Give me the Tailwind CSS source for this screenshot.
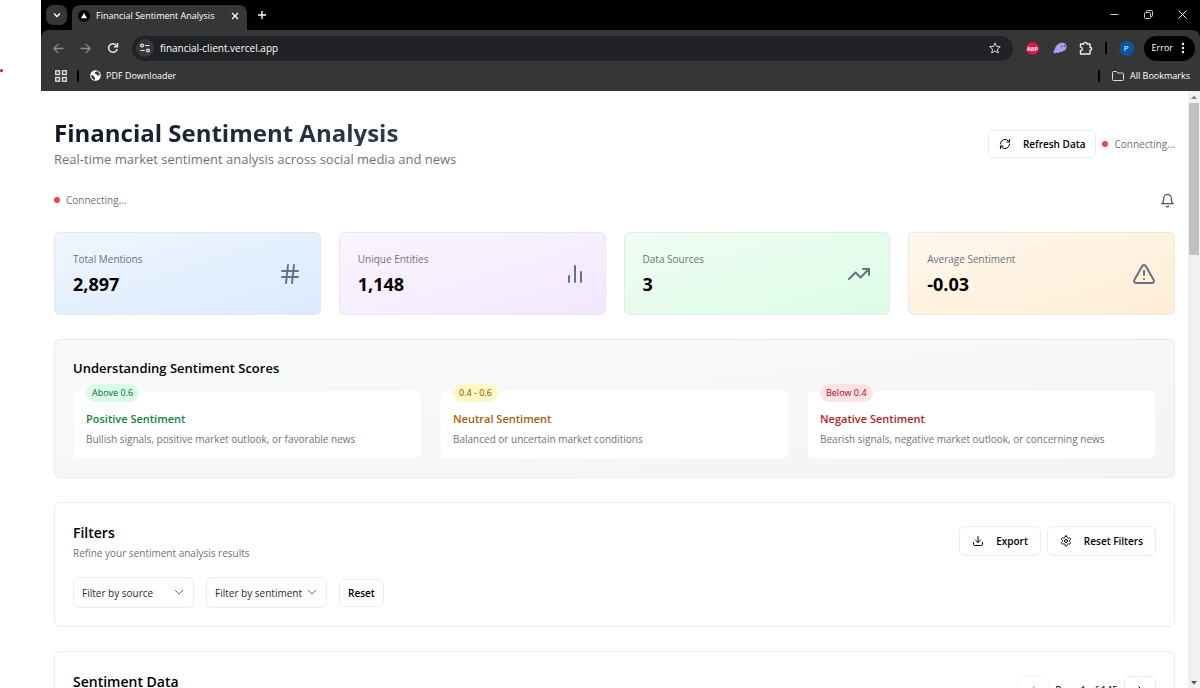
<!DOCTYPE html>
<html lang="en">
<head>
  <meta charset="UTF-8">
  <meta name="viewport" content="width=device-width, initial-scale=1">
  <title>Financial Sentiment Analysis</title>
  <!-- Tailwind CSS -->
  <script src="https://cdn.jsdelivr.net/npm/@tailwindcss/browser@4"></script>
</head>
<body class="flex h-screen overflow-hidden bg-white font-['Open_Sans','Noto_Sans',sans-serif] text-[10px] leading-4 text-black">

  <!-- Margin beside the window -->
  <div class="w-[41px] shrink-0 pt-[69px]">
    <div class="h-[3px] w-[3px] rounded-full bg-red-600"></div>
  </div>

  <div class="flex min-w-0 flex-1 flex-col">

    <!-- Browser chrome -->
    <header class="shrink-0 bg-black text-[10px] text-white">
      <div class="flex h-[30px] items-end">
        <button aria-label="Search tabs" class="mb-[5px] ml-[5px] flex h-5 w-[21px] items-center justify-center rounded-[7px] bg-[#363636]">
          <svg class="h-2 w-2" viewBox="0 0 8 8" fill="none" stroke="currentColor" stroke-width="1.3"><path d="M1 2.5l3 3 3-3"/></svg>
        </button>
        <div class="ml-[5px] flex h-[25px] w-[175px] items-center rounded-t-lg bg-[#363636] pr-2 pb-1 pl-1.5">
          <svg class="h-3 w-3" viewBox="0 0 12 12"><circle cx="6" cy="6" r="6" fill="#000"/><path d="M6 3l3 5.2H3z" fill="#fff"/></svg>
          <span class="ml-1.5 flex-1 whitespace-nowrap text-[9px]">Financial Sentiment Analysis</span>
          <button aria-label="Close tab"><svg class="h-2 w-2" viewBox="0 0 8 8" stroke="currentColor" stroke-width="1.3"><path d="M1 1l6 6M7 1L1 7"/></svg></button>
        </div>
        <button aria-label="New tab" class="mb-[11px] ml-[11px]"><svg class="h-2 w-2" viewBox="0 0 8 8" stroke="currentColor" stroke-width="1.4"><path d="M4 0v8M0 4h8"/></svg></button>
        <div class="mr-[13px] mb-[11px] ml-auto flex gap-[25px]">
          <button aria-label="Minimize"><svg class="h-[9px] w-[9px]" viewBox="0 0 9 9" stroke="#ccc"><path d="M.5 4.5h8"/></svg></button>
          <button aria-label="Restore"><svg class="h-[9px] w-[9px]" viewBox="0 0 9 9" fill="none" stroke="#ccc"><rect x=".5" y="2.5" width="6" height="6" rx="1"/><path d="M2.5 2.5V1.5a1 1 0 0 1 1-1h4a1 1 0 0 1 1 1v4a1 1 0 0 1-1 1h-1"/></svg></button>
          <button aria-label="Close window"><svg class="h-[9px] w-[9px]" viewBox="0 0 9 9" stroke="#eee"><path d="M.5.5l8 8M8.5.5l-8 8"/></svg></button>
        </div>
      </div>

      <div class="rounded-t-lg bg-[#363636]">
        <div class="flex h-9 items-center pr-[5px] pl-3">
          <div class="flex items-center gap-4">
            <button aria-label="Back"><svg class="h-[11px] w-[11px]" viewBox="0 0 10 10" fill="none" stroke="#8a8a8a" stroke-width="1.2"><path d="M9.5 5H1M5 .8L.8 5 5 9.200"/></svg></button>
            <button aria-label="Forward"><svg class="h-[11px] w-[11px]" viewBox="0 0 10 10" fill="none" stroke="#8a8a8a" stroke-width="1.2"><path d="M.5 5H9M5 .8L9.200 5 5 9.200"/></svg></button>
            <button aria-label="Reload"><svg class="h-3 w-3" viewBox="0 0 12 12" fill="none" stroke="#eee" stroke-width="1.4"><path d="M10.200 6.800A4.300 4.300 0 1 1 9.400 3.400L10.500 4.600"/><path d="M10.500 1v3.700H7"/></svg></button>
          </div>
          <div class="mx-[13px] flex h-[25px] flex-1 items-center rounded-full bg-[#212226] pr-3 pl-1">
            <span class="flex h-[18px] w-[18px] items-center justify-center rounded-full bg-[#36373a]">
              <svg class="h-2.5 w-2.5" viewBox="0 0 10 10" fill="none" stroke="#e8e8e8" stroke-width="1.2"><circle cx="2" cy="2.500" r="1.400"/><path d="M5 2.500h4.500M.5 7.500h4.200"/><circle cx="8" cy="7.500" r="1.400"/></svg>
            </span>
            <input aria-label="Address" type="text" value="financial-client.vercel.app" class="ml-1.5 min-w-0 flex-1 bg-transparent text-[10px] outline-none">
            <button aria-label="Bookmark this page"><svg class="h-3 w-3" viewBox="0 0 12 12" fill="none" stroke="#ddd" stroke-linejoin="round"><path d="M6 .9l1.500 3.500 3.800.3-2.900 2.500.9 3.700L6 8.900l-3.300 2 .9-3.700L.7 4.700l3.800-.3z"/></svg></button>
          </div>
          <div class="flex items-center">
            <svg class="h-[13px] w-[13px]" viewBox="0 0 14 14"><path d="M4.300.5h5.400l3.800 3.800v5.400l-3.800 3.800H4.300L.5 9.700V4.300z" fill="#e5174b"/><text x="7" y="9.300" text-anchor="middle" font-size="6" font-weight="700" fill="#fff">ABP</text></svg>
            <svg class="ml-3.5 h-3 w-3.5" viewBox="0 0 14 12"><path d="M.8 11c-.8-1 .2-2 .8-3.500C2.800 3 6 .7 9.300.7c3 0 4.400 2 4.200 4.300-.2 2.200-1.500 3.700-3 3.700-.8 0-.8.9-1.700 1.200-.9.3-1.300-.6-2 .1-.6.8-1.600 1.400-2.500.8-.8-.5-1 .2-1.700.4-.6.2-1.400.2-1.800-.2z" fill="#ab9ff2"/><path d="M9 3.200v1.600M11.600 3.200v1.600" stroke="#363636" stroke-width="1.100"/></svg>
            <svg class="ml-3 h-3.5 w-3.5" viewBox="0 0 14 14" fill="none" stroke="#eee" stroke-width="1.400" stroke-linejoin="round"><path d="M1.500 3h3.300c0-2.200 3.200-2.200 3.200 0h3v3.300c2.200 0 2.200 3 0 3V13H1.500V9.800c2.500-.1 2.500-3.600 0-3.700z"/></svg>
            <span class="ml-3 h-3 w-0.5 bg-black"></span>
            <span class="ml-3 flex h-[15px] w-[15px] items-center justify-center rounded-full bg-[#0b57a4] text-[8px]">P</span>
            <button class="ml-2.5 flex h-[25px] items-center gap-2 rounded-full bg-black pr-2.5 pl-2 text-[9px]">Error
              <svg class="h-3 w-1" viewBox="0 0 4 12" fill="currentColor"><circle cx="2" cy="2" r="1.200"/><circle cx="2" cy="6" r="1.200"/><circle cx="2" cy="10" r="1.200"/></svg>
            </button>
          </div>
        </div>
        <nav class="flex h-[25px] items-center pr-2.5 pb-1.5 pl-3.5 text-[9px]">
          <svg class="h-3 w-3" viewBox="0 0 11 11" fill="none" stroke="#ddd" stroke-width="1.300"><rect x=".7" y=".7" width="3.400" height="3.400"/><rect x="6.900" y=".7" width="3.400" height="3.400"/><rect x=".7" y="6.900" width="3.400" height="3.400"/><rect x="6.900" y="6.900" width="3.400" height="3.400"/></svg>
          <span class="ml-2.5 h-3 w-0.5 bg-black"></span>
          <a href="#" class="ml-[11px] flex items-center gap-[5px]">
            <svg class="h-[11px] w-[11px]" viewBox="0 0 11 11"><circle cx="5.500" cy="5.500" r="5.300" fill="#fff"/><path d="M1.200 5.200c1.800 0 2.800.3 2.800 1.300s1 .8 1 1.700v1.600C2.700 9.700 1 7.700 1.200 5.200zM6.500 1.200c-.1 1-1.700.8-1.700 1.900s1.500.7 2 1.600c.4.900 1.800.7 3 .6C9.700 3.200 8.400 1.700 6.500 1.200z" fill="#363636"/></svg>
            PDF Downloader
          </a>
          <span class="ml-auto h-3 w-0.5 bg-black"></span>
          <a href="#" class="ml-3 flex items-center gap-1.5">
            <svg class="h-2.5 w-3" viewBox="0 0 12 10" fill="none" stroke="#ddd" stroke-linejoin="round"><path d="M.5 1.500a1 1 0 0 1 1-1h3l1.300 1.500h4.700a1 1 0 0 1 1 1v5.500a1 1 0 0 1-1 1h-9a1 1 0 0 1-1-1z"/></svg>
            All Bookmarks
          </a>
        </nav>
      </div>
    </header>

    <!-- Page -->
    <div class="flex min-h-0 flex-1">
      <main class="flex min-w-0 flex-1 flex-col gap-6 overflow-hidden px-[13px] pt-7">

        <div class="flex items-center justify-between">
          <div>
            <h1 class="bg-gradient-to-r from-gray-900 to-gray-700 bg-clip-text text-[24px] leading-[27px] font-bold text-transparent">Financial Sentiment Analysis</h1>
            <p class="mt-1 text-[13px] leading-[18px] text-zinc-500">Real-time market sentiment analysis across social media and news</p>
          </div>
          <div class="flex items-center gap-1.5">
            <button class="flex h-7 items-center gap-3 rounded-md border border-zinc-200/70 px-2.5 font-semibold">
              <svg class="h-3 w-3" viewBox="0 0 24 24" fill="none" stroke="currentColor" stroke-width="2" stroke-linecap="round" stroke-linejoin="round"><path d="M3 12a9 9 0 0 1 9-9 9.750 9.750 0 0 1 6.740 2.740L21 8"/><path d="M21 3v5h-5"/><path d="M21 12a9 9 0 0 1-9 9 9.750 9.750 0 0 1-6.740-2.740L3 16"/><path d="M8 16H3v5"/></svg>
              Refresh Data
            </button>
            <div class="flex items-center gap-1.5 text-zinc-500"><span class="h-1.5 w-1.5 rounded-full bg-[#ef4444]"></span>Connecting...</div>
          </div>
        </div>

        <div class="flex h-[18px] items-center justify-between">
          <div class="flex items-center gap-1.5 text-zinc-500"><span class="h-1.5 w-1.5 rounded-full bg-[#ef4444]"></span>Connecting...</div>
          <button aria-label="Notifications" class="text-gray-600"><svg class="h-[15px] w-[15px]" viewBox="0 0 24 24" fill="none" stroke="currentColor" stroke-width="2" stroke-linecap="round" stroke-linejoin="round"><path d="M6 8a6 6 0 0 1 12 0c0 7 3 9 3 9H3s3-2 3-9"/><path d="M10.300 21a1.940 1.940 0 0 0 3.400 0"/></svg></button>
        </div>

        <!-- Stats -->
        <section class="grid grid-cols-4 gap-[18px]">
          <div class="flex items-center justify-between rounded-md border border-zinc-200/70 bg-gradient-to-br from-blue-50 to-blue-100 p-[18px]">
            <div>
              <p class="font-medium text-zinc-500">Total Mentions</p>
              <p class="mt-1.5 text-[18px] leading-[23px] font-bold">2,897</p>
            </div>
            <svg class="h-6 w-6 text-gray-500" viewBox="0 0 24 24" fill="none" stroke="currentColor" stroke-width="2" stroke-linecap="round" stroke-linejoin="round"><path d="M4 9h16M4 15h16M10 3L8 21M16 3l-2 18"/></svg>
          </div>
          <div class="flex items-center justify-between rounded-md border border-zinc-200/70 bg-gradient-to-br from-purple-50 to-purple-100 p-[18px]">
            <div>
              <p class="font-medium text-zinc-500">Unique Entities</p>
              <p class="mt-1.5 text-[18px] leading-[23px] font-bold">1,148</p>
            </div>
            <svg class="h-6 w-6 text-gray-500" viewBox="0 0 24 24" fill="none" stroke="currentColor" stroke-width="2" stroke-linecap="round" stroke-linejoin="round"><path d="M18 20V10M12 20V4M6 20v-6"/></svg>
          </div>
          <div class="flex items-center justify-between rounded-md border border-zinc-200/70 bg-gradient-to-br from-green-50 to-green-100 p-[18px]">
            <div>
              <p class="font-medium text-zinc-500">Data Sources</p>
              <p class="mt-1.5 text-[18px] leading-[23px] font-bold">3</p>
            </div>
            <svg class="h-6 w-6 text-gray-500" viewBox="0 0 24 24" fill="none" stroke="currentColor" stroke-width="2" stroke-linecap="round" stroke-linejoin="round"><path d="M22 7l-8.500 8.500-5-5L2 17"/><path d="M16 7h6v6"/></svg>
          </div>
          <div class="flex items-center justify-between rounded-md border border-zinc-200/70 bg-gradient-to-br from-orange-50 to-orange-100 p-[18px]">
            <div>
              <p class="font-medium text-zinc-500">Average Sentiment</p>
              <p class="mt-1.5 text-[18px] leading-[23px] font-bold">-0.03</p>
            </div>
            <svg class="h-6 w-6 text-gray-500" viewBox="0 0 24 24" fill="none" stroke="currentColor" stroke-width="2" stroke-linecap="round" stroke-linejoin="round"><path d="M21.730 18l-8-14a2 2 0 0 0-3.480 0l-8 14A2 2 0 0 0 4 21h16a2 2 0 0 0 1.730-3"/><path d="M12 9v4M12 17h.01"/></svg>
          </div>
        </section>

        <!-- Score legend -->
        <section class="rounded-md border border-zinc-200/70 bg-gradient-to-br from-gray-50 to-gray-100 p-[18px]">
          <h2 class="text-[13px] leading-5 font-semibold">Understanding Sentiment Scores</h2>
          <div class="mt-3 grid grid-cols-3 gap-[18px]">
            <div class="relative rounded-md border border-green-50 bg-white px-3 pt-5 pb-[11px]">
              <span class="absolute -top-[7px] left-3 rounded-full bg-green-100 px-1.5 text-[9px] leading-[18px] font-medium text-green-800">Above 0.6</span>
              <h3 class="text-[11px] font-semibold text-[#15803d]">Positive Sentiment</h3>
              <p class="mt-1 text-zinc-500">Bullish signals, positive market outlook, or favorable news</p>
            </div>
            <div class="relative rounded-md border border-yellow-50 bg-white px-3 pt-5 pb-[11px]">
              <span class="absolute -top-[7px] left-3 rounded-full bg-yellow-100 px-1.5 text-[9px] leading-[18px] font-medium text-yellow-800">0.4 - 0.6</span>
              <h3 class="text-[11px] font-semibold text-[#a16207]">Neutral Sentiment</h3>
              <p class="mt-1 text-zinc-500">Balanced or uncertain market conditions</p>
            </div>
            <div class="relative rounded-md border border-red-50 bg-white px-3 pt-5 pb-[11px]">
              <span class="absolute -top-[7px] left-3 rounded-full bg-red-100 px-1.5 text-[9px] leading-[18px] font-medium text-red-800">Below 0.4</span>
              <h3 class="text-[11px] font-semibold text-[#b91c1c]">Negative Sentiment</h3>
              <p class="mt-1 text-zinc-500">Bearish signals, negative market outlook, or concerning news</p>
            </div>
          </div>
        </section>

        <!-- Filters -->
        <section class="rounded-md border border-zinc-200/70 p-[18px]">
          <div class="flex items-center justify-between">
            <div>
              <h2 class="text-[14px] leading-6 font-semibold">Filters</h2>
              <p class="text-zinc-500">Refine your sentiment analysis results</p>
            </div>
            <div class="flex gap-1.5">
              <button class="flex h-[30px] items-center gap-3 rounded-md border border-zinc-200/70 px-3 font-semibold">
                <svg class="h-3 w-3" viewBox="0 0 24 24" fill="none" stroke="currentColor" stroke-width="2" stroke-linecap="round" stroke-linejoin="round"><path d="M21 15v4a2 2 0 0 1-2 2H5a2 2 0 0 1-2-2v-4"/><path d="M7 10l5 5 5-5M12 15V3"/></svg>
                Export
              </button>
              <button class="flex h-[30px] items-center gap-3 rounded-md border border-zinc-200/70 px-3 font-semibold">
                <svg class="h-3 w-3" viewBox="0 0 24 24" fill="none" stroke="currentColor" stroke-width="2" stroke-linecap="round" stroke-linejoin="round"><path d="M12.220 2h-.44a2 2 0 0 0-2 2v.18a2 2 0 0 1-1 1.730l-.43.25a2 2 0 0 1-2 0l-.15-.08a2 2 0 0 0-2.730.73l-.22.38a2 2 0 0 0 .73 2.730l.15.1a2 2 0 0 1 1 1.720v.51a2 2 0 0 1-1 1.740l-.15.09a2 2 0 0 0-.73 2.730l.22.38a2 2 0 0 0 2.730.73l.15-.08a2 2 0 0 1 2 0l.43.25a2 2 0 0 1 1 1.730V20a2 2 0 0 0 2 2h.44a2 2 0 0 0 2-2v-.18a2 2 0 0 1 1-1.730l.43-.25a2 2 0 0 1 2 0l.15.08a2 2 0 0 0 2.730-.73l.22-.39a2 2 0 0 0-.73-2.730l-.15-.08a2 2 0 0 1-1-1.740v-.5a2 2 0 0 1 1-1.740l.15-.09a2 2 0 0 0 .73-2.730l-.22-.38a2 2 0 0 0-2.730-.73l-.15.08a2 2 0 0 1-2 0l-.43-.25a2 2 0 0 1-1-1.730V4a2 2 0 0 0-2-2z"/><circle cx="12" cy="12" r="3"/></svg>
                Reset Filters
              </button>
            </div>
          </div>
          <div class="mt-4 flex items-center gap-3">
            <div class="relative">
              <select aria-label="Filter by source" class="h-[31px] w-[121px] appearance-none rounded-md border border-zinc-200/70 bg-white pl-2 text-gray-800">
                <option>Filter by source</option>
              </select>
              <svg class="pointer-events-none absolute top-2.5 right-2.5 h-2.5 w-2.5 text-gray-500" viewBox="0 0 10 10" fill="none" stroke="currentColor"><path d="M1 3l4 4 4-4"/></svg>
            </div>
            <div class="relative">
              <select aria-label="Filter by sentiment" class="h-[31px] w-[121px] appearance-none rounded-md border border-zinc-200/70 bg-white pl-2 text-gray-800">
                <option>Filter by sentiment</option>
              </select>
              <svg class="pointer-events-none absolute top-2.5 right-2.5 h-2.5 w-2.5 text-gray-500" viewBox="0 0 10 10" fill="none" stroke="currentColor"><path d="M1 3l4 4 4-4"/></svg>
            </div>
            <button class="h-7 rounded-md border border-zinc-200/70 px-2 font-semibold">Reset</button>
          </div>
        </section>

        <!-- Data table card -->
        <section class="rounded-md border border-zinc-200/70 p-[18px]">
          <div class="flex h-10 items-center justify-between">
            <h2 class="self-start text-[14px] leading-6 font-semibold">Sentiment Data</h2>
            <div class="flex items-center gap-1.5">
              <button aria-label="Previous page" class="flex h-7 w-8 items-center justify-center rounded-md border border-zinc-200/70 opacity-50"><svg class="h-2.5 w-2.5" viewBox="0 0 10 10" fill="none" stroke="currentColor"><path d="M6.500 1.500L3 5l3.500 3.500"/></svg></button>
              <span>Page 1 of 145</span>
              <button aria-label="Next page" class="flex h-7 w-8 items-center justify-center rounded-md border border-zinc-200/70"><svg class="h-2.5 w-2.5" viewBox="0 0 10 10" fill="none" stroke="currentColor"><path d="M3.500 1.500L7 5 3.500 8.500"/></svg></button>
            </div>
          </div>
        </section>
      </main>

      <!-- Scrollbar -->
      <div class="flex w-3 shrink-0 flex-col items-center bg-[#f1f1f1]">
        <svg class="h-3 w-3" viewBox="0 0 12 12" fill="#8a8a8a"><path d="M6 4.500L9 8H3z"/></svg>
        <div class="h-[152px] w-2.5 bg-[#c1c1c1]"></div>
        <svg class="mt-auto h-3 w-3" viewBox="0 0 12 12" fill="#505050"><path d="M6 8.500L9 5H3z"/></svg>
      </div>
    </div>
  </div>
</body>
</html>
